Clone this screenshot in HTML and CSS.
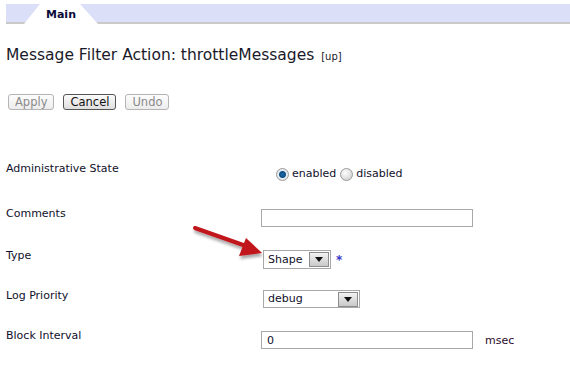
FILE: index.html
```html
<!DOCTYPE html>
<html>
  <head>
    <title>Message Filter Action</title>
    <link rel="stylesheet" href="styles.css">
  </head>
  <body>
    <div class="tabbar">
      <div class="tab">Main</div>
    </div>

    <h1 class="title">Message Filter Action: throttleMessages <span class="up">[up]</span></h1>

    <div class="buttons">
      <button class="btn btn-off" type="button">Apply</button>
      <button class="btn" type="button">Cancel</button>
      <button class="btn btn-off" type="button">Undo</button>
    </div>

    <div class="form">
      <div class="row row-state">
        <div class="label">Administrative State</div>
        <div class="field field-radio">
          <span class="radio radio-on"></span><span class="radio-text">enabled</span>
          <span class="radio"></span><span class="radio-text">disabled</span>
        </div>
      </div>
      <div class="row row-comments">
        <div class="label">Comments</div>
        <div class="field"><div class="text-input"></div></div>
      </div>
      <div class="row">
        <div class="label">Type</div>
        <div class="field field-select">
          <div class="select select-type">
            <span class="select-value">Shape</span>
            <span class="select-btn"><span class="caret"></span></span>
          </div>
          <span class="required">*</span>
        </div>
      </div>
      <div class="row">
        <div class="label">Log Priority</div>
        <div class="field field-select">
          <div class="select select-log">
            <span class="select-value">debug</span>
            <span class="select-btn"><span class="caret"></span></span>
          </div>
        </div>
      </div>
      <div class="row">
        <div class="label">Block Interval</div>
        <div class="field">
          <div class="text-input">0</div>
          <span class="unit">msec</span>
        </div>
      </div>
    </div>

    <!-- pointer arrow drawn over the form -->
    <svg class="arrow" width="90" height="50" viewBox="0 0 90 50">
      <defs>
        <filter id="shadow" x="-20%" y="-20%" width="140%" height="160%">
          <feDropShadow dx="1" dy="3" stdDeviation="1.6" flood-color="#000" flood-opacity="0.35"/>
        </filter>
      </defs>
      <g filter="url(#shadow)">
        <line x1="5" y1="7" x2="56" y2="25" stroke="#c0141a" stroke-width="4" stroke-linecap="round"/>
        <polygon points="72,32 49,35 56,17" fill="#c0141a"/>
      </g>
    </svg>
  </body>
</html>
```

FILE: styles.css
```css
body {
  margin: 0;
  padding: 4px 0 0 6px;
  font-family: "DejaVu Sans", Verdana, sans-serif;
  font-size: 11px;
  color: #10102a;
  background: #fff;
}

/* tab strip */
.tabbar {
  height: 20px;
  display: flex;
  background: linear-gradient(#dbdff8 0, #dbdff8 18px, #cacaca 18px, #cacaca 20px);
}
.tab {
  width: 74px;
  height: 20px;
  margin-left: 18px;
  background: #fff;
  clip-path: polygon(16px 0, 56px 0, 100% 100%, 0 100%);
  font-weight: bold;
  font-size: 11px;
  color: #0a0a3a;
  text-align: center;
  line-height: 22px;
}

.title {
  margin: 22px 0 0;
  font-size: 15.5px;
  font-weight: normal;
  color: #1a1a2a;
  line-height: 18px;
}
.up {
  font-size: 10px;
  margin-left: 2px;
}

/* buttons */
.buttons {
  display: flex;
  gap: 9px;
  margin-top: 28px;
  margin-left: 2px;
}
.btn {
  height: 16px;
  padding: 0 6px;
  font-family: "DejaVu Sans", Verdana, sans-serif;
  font-size: 11.5px;
  line-height: 14px;
  color: #111;
  border: 1px solid #555;
  border-radius: 3px;
  background: linear-gradient(#fbfbfb, #dedede);
}
.btn-off {
  color: #8a8a8a;
  border-color: #b4b4b4;
  background: linear-gradient(#fdfdfd, #ececec);
}

/* form rows */
.form {
  margin-top: 52px;
}
.row {
  display: flex;
  align-items: flex-start;
  height: 40px;
}
.row-state {
  height: 45px;
}
.row-comments {
  height: 42px;
}
.label {
  width: 255px;
  line-height: 14px;
}
.field {
  display: flex;
  align-items: center;
  padding-top: 2px;
}
.field-select {
  padding-top: 1px;
  padding-left: 2px;
}

.field-radio {
  padding-top: 5px;
  padding-left: 15px;
}
.radio {
  width: 11px;
  height: 11px;
  border-radius: 50%;
  border: 1px solid #9a9a9a;
  background: radial-gradient(circle at 40% 35%, #ffffff, #d8d8d8 70%);
  margin-right: 3px;
}
.radio-on {
  background: radial-gradient(circle at 50% 50%, #1f6aa6 0, #0c4f86 3px, #e9eef2 4px, #d6dbe0 100%);
}
.radio-text {
  margin-right: 4px;
  line-height: 14px;
}

.text-input {
  width: 200px;
  height: 16px;
  padding: 0 5px;
  border: 1px solid #a8a8a8;
  line-height: 17px;
}
.unit {
  margin-left: 12px;
  color: #2a0a2a;
}

/* fake dropdowns */
.select {
  display: flex;
  align-items: center;
  height: 17px;
  border: 1px solid #a8a8a8;
  padding-right: 1px;
}
.select-type {
  width: 65px;
}
.select-log {
  width: 94px;
  height: 16px;
}
.select-value {
  flex: 1;
  padding-left: 4px;
  line-height: 16px;
}
.select-btn {
  width: 18px;
  height: 13px;
  border: 1px solid #8c8c8c;
  background: linear-gradient(#f2f2f2, #c9c9c9);
  display: flex;
  align-items: center;
  justify-content: center;
}
.caret {
  width: 0;
  height: 0;
  border-left: 4px solid transparent;
  border-right: 4px solid transparent;
  border-top: 5px solid #111;
}
.required {
  margin-left: 5px;
  color: #3636c8;
  font-size: 12px;
  font-weight: bold;
}

.arrow {
  position: absolute;
  left: 190px;
  top: 221px;
}
```
